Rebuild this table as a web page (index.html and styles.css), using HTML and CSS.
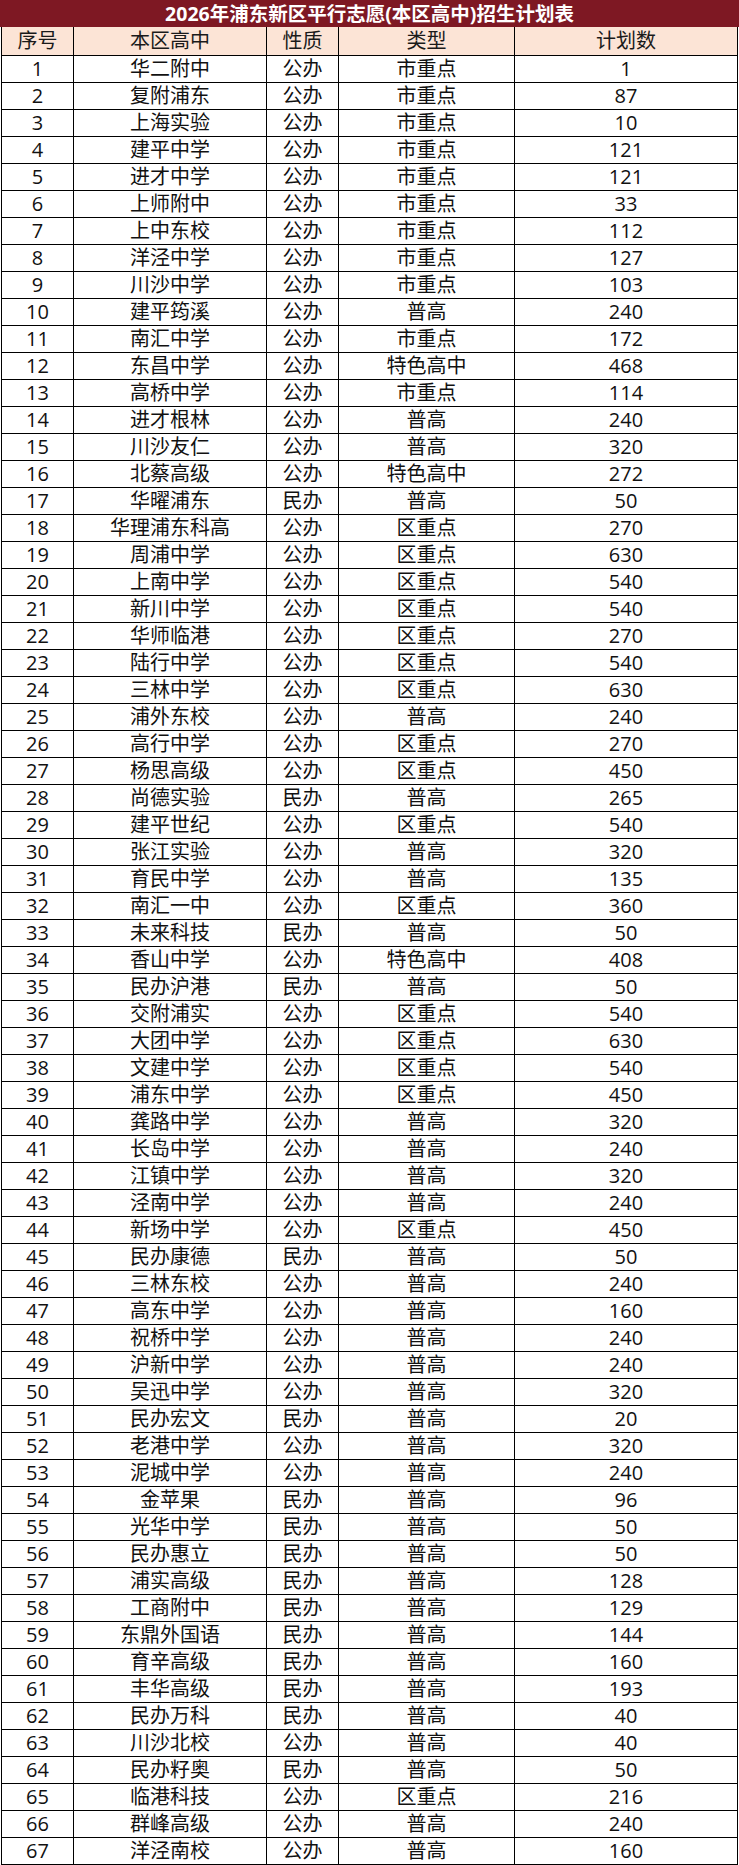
FILE: index.html
```html
<!DOCTYPE html>
<html lang="zh-CN">
<head>
<meta charset="utf-8">
<title>2026年浦东新区平行志愿(本区高中)招生计划表</title>
<link rel="stylesheet" href="styles.css">
</head>
<body>
<div class="title">2026年浦东新区平行志愿(本区高中)招生计划表</div>
<div class="wrap">
<table class="plan">
<colgroup>
<col class="c1"><col class="c2"><col class="c3"><col class="c4"><col class="c5">
</colgroup>
<thead>
<tr><th>序号</th><th>本区高中</th><th>性质</th><th>类型</th><th>计划数</th></tr>
</thead>
<tbody>
<tr><td>1</td><td>华二附中</td><td>公办</td><td>市重点</td><td>1</td></tr>
<tr><td>2</td><td>复附浦东</td><td>公办</td><td>市重点</td><td>87</td></tr>
<tr><td>3</td><td>上海实验</td><td>公办</td><td>市重点</td><td>10</td></tr>
<tr><td>4</td><td>建平中学</td><td>公办</td><td>市重点</td><td>121</td></tr>
<tr><td>5</td><td>进才中学</td><td>公办</td><td>市重点</td><td>121</td></tr>
<tr><td>6</td><td>上师附中</td><td>公办</td><td>市重点</td><td>33</td></tr>
<tr><td>7</td><td>上中东校</td><td>公办</td><td>市重点</td><td>112</td></tr>
<tr><td>8</td><td>洋泾中学</td><td>公办</td><td>市重点</td><td>127</td></tr>
<tr><td>9</td><td>川沙中学</td><td>公办</td><td>市重点</td><td>103</td></tr>
<tr><td>10</td><td>建平筠溪</td><td>公办</td><td>普高</td><td>240</td></tr>
<tr><td>11</td><td>南汇中学</td><td>公办</td><td>市重点</td><td>172</td></tr>
<tr><td>12</td><td>东昌中学</td><td>公办</td><td>特色高中</td><td>468</td></tr>
<tr><td>13</td><td>高桥中学</td><td>公办</td><td>市重点</td><td>114</td></tr>
<tr><td>14</td><td>进才根林</td><td>公办</td><td>普高</td><td>240</td></tr>
<tr><td>15</td><td>川沙友仁</td><td>公办</td><td>普高</td><td>320</td></tr>
<tr><td>16</td><td>北蔡高级</td><td>公办</td><td>特色高中</td><td>272</td></tr>
<tr><td>17</td><td>华曜浦东</td><td>民办</td><td>普高</td><td>50</td></tr>
<tr><td>18</td><td>华理浦东科高</td><td>公办</td><td>区重点</td><td>270</td></tr>
<tr><td>19</td><td>周浦中学</td><td>公办</td><td>区重点</td><td>630</td></tr>
<tr><td>20</td><td>上南中学</td><td>公办</td><td>区重点</td><td>540</td></tr>
<tr><td>21</td><td>新川中学</td><td>公办</td><td>区重点</td><td>540</td></tr>
<tr><td>22</td><td>华师临港</td><td>公办</td><td>区重点</td><td>270</td></tr>
<tr><td>23</td><td>陆行中学</td><td>公办</td><td>区重点</td><td>540</td></tr>
<tr><td>24</td><td>三林中学</td><td>公办</td><td>区重点</td><td>630</td></tr>
<tr><td>25</td><td>浦外东校</td><td>公办</td><td>普高</td><td>240</td></tr>
<tr><td>26</td><td>高行中学</td><td>公办</td><td>区重点</td><td>270</td></tr>
<tr><td>27</td><td>杨思高级</td><td>公办</td><td>区重点</td><td>450</td></tr>
<tr><td>28</td><td>尚德实验</td><td>民办</td><td>普高</td><td>265</td></tr>
<tr><td>29</td><td>建平世纪</td><td>公办</td><td>区重点</td><td>540</td></tr>
<tr><td>30</td><td>张江实验</td><td>公办</td><td>普高</td><td>320</td></tr>
<tr><td>31</td><td>育民中学</td><td>公办</td><td>普高</td><td>135</td></tr>
<tr><td>32</td><td>南汇一中</td><td>公办</td><td>区重点</td><td>360</td></tr>
<tr><td>33</td><td>未来科技</td><td>民办</td><td>普高</td><td>50</td></tr>
<tr><td>34</td><td>香山中学</td><td>公办</td><td>特色高中</td><td>408</td></tr>
<tr><td>35</td><td>民办沪港</td><td>民办</td><td>普高</td><td>50</td></tr>
<tr><td>36</td><td>交附浦实</td><td>公办</td><td>区重点</td><td>540</td></tr>
<tr><td>37</td><td>大团中学</td><td>公办</td><td>区重点</td><td>630</td></tr>
<tr><td>38</td><td>文建中学</td><td>公办</td><td>区重点</td><td>540</td></tr>
<tr><td>39</td><td>浦东中学</td><td>公办</td><td>区重点</td><td>450</td></tr>
<tr><td>40</td><td>龚路中学</td><td>公办</td><td>普高</td><td>320</td></tr>
<tr><td>41</td><td>长岛中学</td><td>公办</td><td>普高</td><td>240</td></tr>
<tr><td>42</td><td>江镇中学</td><td>公办</td><td>普高</td><td>320</td></tr>
<tr><td>43</td><td>泾南中学</td><td>公办</td><td>普高</td><td>240</td></tr>
<tr><td>44</td><td>新场中学</td><td>公办</td><td>区重点</td><td>450</td></tr>
<tr><td>45</td><td>民办康德</td><td>民办</td><td>普高</td><td>50</td></tr>
<tr><td>46</td><td>三林东校</td><td>公办</td><td>普高</td><td>240</td></tr>
<tr><td>47</td><td>高东中学</td><td>公办</td><td>普高</td><td>160</td></tr>
<tr><td>48</td><td>祝桥中学</td><td>公办</td><td>普高</td><td>240</td></tr>
<tr><td>49</td><td>沪新中学</td><td>公办</td><td>普高</td><td>240</td></tr>
<tr><td>50</td><td>吴迅中学</td><td>公办</td><td>普高</td><td>320</td></tr>
<tr><td>51</td><td>民办宏文</td><td>民办</td><td>普高</td><td>20</td></tr>
<tr><td>52</td><td>老港中学</td><td>公办</td><td>普高</td><td>320</td></tr>
<tr><td>53</td><td>泥城中学</td><td>公办</td><td>普高</td><td>240</td></tr>
<tr><td>54</td><td>金苹果</td><td>民办</td><td>普高</td><td>96</td></tr>
<tr><td>55</td><td>光华中学</td><td>民办</td><td>普高</td><td>50</td></tr>
<tr><td>56</td><td>民办惠立</td><td>民办</td><td>普高</td><td>50</td></tr>
<tr><td>57</td><td>浦实高级</td><td>民办</td><td>普高</td><td>128</td></tr>
<tr><td>58</td><td>工商附中</td><td>民办</td><td>普高</td><td>129</td></tr>
<tr><td>59</td><td>东鼎外国语</td><td>民办</td><td>普高</td><td>144</td></tr>
<tr><td>60</td><td>育辛高级</td><td>民办</td><td>普高</td><td>160</td></tr>
<tr><td>61</td><td>丰华高级</td><td>民办</td><td>普高</td><td>193</td></tr>
<tr><td>62</td><td>民办万科</td><td>民办</td><td>普高</td><td>40</td></tr>
<tr><td>63</td><td>川沙北校</td><td>公办</td><td>普高</td><td>40</td></tr>
<tr><td>64</td><td>民办籽奥</td><td>民办</td><td>普高</td><td>50</td></tr>
<tr><td>65</td><td>临港科技</td><td>公办</td><td>区重点</td><td>216</td></tr>
<tr><td>66</td><td>群峰高级</td><td>公办</td><td>普高</td><td>240</td></tr>
<tr><td>67</td><td>洋泾南校</td><td>公办</td><td>普高</td><td>160</td></tr>
</tbody>
</table>
</div>
</body>
</html>
```

FILE: styles.css
```css
html, body {
  margin: 0;
  padding: 0;
  background: #ffffff;
}

body {
  font-family: "Open Sans", "Noto Sans CJK SC", sans-serif;
  color: #111111;
}

.title {
  height: 27px;
  line-height: 27px;
  background: #7e1823;
  color: #ffffff;
  font-weight: 700;
  font-size: 19.5px;
  text-align: center;
  white-space: nowrap;
}

.wrap {
  padding-left: 1px;
}

.plan {
  border-collapse: separate;
  border-spacing: 0;
  table-layout: fixed;
  width: 737px;
  border-left: 1px solid #000;
}

.plan .c1 { width: 72px; }
.plan .c2 { width: 193px; }
.plan .c3 { width: 72px; }
.plan .c4 { width: 176px; }
.plan .c5 { width: 223px; }

.plan th,
.plan td {
  padding: 0;
  text-align: center;
  font-size: 20px;
  font-weight: 400;
  white-space: nowrap;
  border-right: 1px solid #000;
  border-bottom: 1px solid #000;
  box-sizing: border-box;
}

.plan th {
  height: 29px;
  line-height: 28px;
  background: #fce4d6;
  color: #1a1a1a;
}

.plan td {
  height: 27px;
  line-height: 26px;
}
```
